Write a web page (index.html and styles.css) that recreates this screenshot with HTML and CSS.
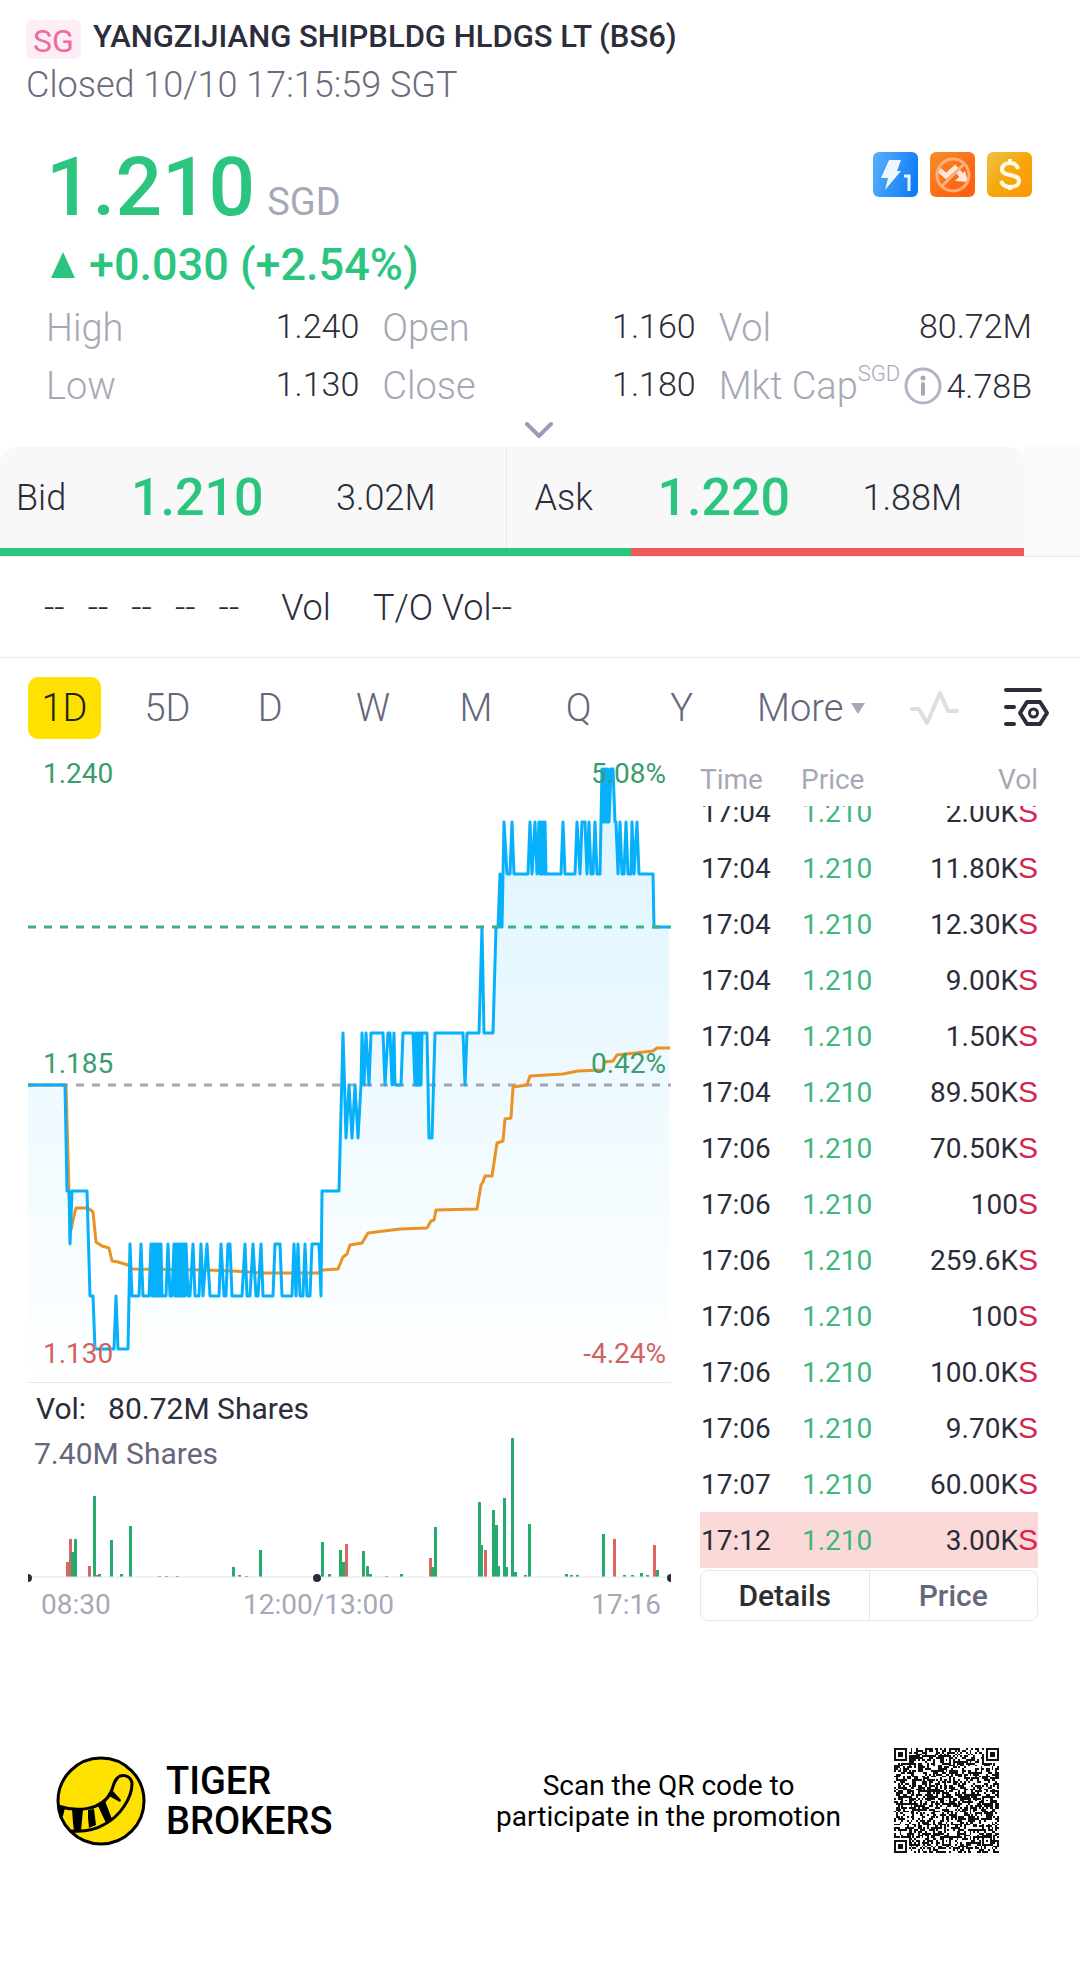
FILE: index.html
```
<!DOCTYPE html>
<html lang="en">
<head>
  <meta charset="UTF-8">
  <meta name="viewport" content="width=device-width, initial-scale=1.0">
  <title>YANGZIJIANG SHIPBLDG HLDGS LT (BS6)</title>
  <link rel="stylesheet" href="styles.css">
</head>
<body>
  <header class="head">
    <div class="head-row">
      <span class="market">SG</span>
      <h1>YANGZIJIANG SHIPBLDG HLDGS LT (BS6)</h1>
    </div>
    <p class="status">Closed 10/10 17:15:59 SGT</p>
  </header>

  <section class="quote">
    <div class="quote-top">
      <div class="last"><span class="last-price">1.210</span><span class="ccy">SGD</span></div>
      <div class="badges">
        <svg viewBox="0 0 45 45">
          <defs>
            <linearGradient id="blue" x1="0" y1="0.3" x2="1" y2="0.6"><stop offset="0" stop-color="#54adfb"/><stop offset="1" stop-color="#0d7cf6"/></linearGradient>
            <linearGradient id="orange" x1="0" y1="0" x2="1" y2="1"><stop offset="0" stop-color="#f5922a"/><stop offset="0.6" stop-color="#fd6a15"/><stop offset="1" stop-color="#ff5d10"/></linearGradient>
            <linearGradient id="gold" x1="0" y1="0" x2="1" y2="1"><stop offset="0" stop-color="#eec14b"/><stop offset="0.5" stop-color="#f6a80b"/><stop offset="1" stop-color="#fb9404"/></linearGradient>
          </defs>
          <rect width="45" height="45" rx="6" fill="url(#blue)"/>
          <path d="M16 8h12l-4 11h4L12 38l3-12H8z" fill="#eef7ff"/>
          <path d="M31 24h5v15" fill="none" stroke="#eef7ff" stroke-width="3"/>
        </svg>
        <svg viewBox="0 0 45 45">
          <rect width="45" height="45" rx="6" fill="url(#orange)"/>
          <path d="M9 18l7 6 9-8 7 8" fill="none" stroke="#ffe9d9" stroke-width="5"/>
          <path d="M25 29l10-10 3 11z" fill="#ffe9d9"/>
          <circle cx="23" cy="23" r="16" fill="none" stroke="#feb07c" stroke-width="3"/>
          <path d="M12 34L34 12" stroke="#feb07c" stroke-width="3"/>
        </svg>
        <svg viewBox="0 0 45 45">
          <rect width="45" height="45" rx="6" fill="url(#gold)"/>
          <path d="M31 17c-1-4-4-6-8-6-5 0-8 3-8 6 0 4 3 5 8 6s9 2 9 6-4 6-9 6-8-3-9-6" fill="none" stroke="#fffbe6" stroke-width="4"/>
          <path d="M23 7v4M23 34v4" stroke="#fffbe6" stroke-width="4"/>
        </svg>
      </div>
    </div>
    <div class="change">
      <svg viewBox="0 0 24 26"><path d="M12 0l12 26H0z" fill="#2cc57f"/></svg>
      <span>+0.030 (+2.54%)</span>
    </div>
    <dl class="stats">
      <div><dt>High</dt><dd>1.240</dd></div>
      <div><dt>Open</dt><dd>1.160</dd></div>
      <div><dt>Vol</dt><dd>80.72M</dd></div>
      <div><dt>Low</dt><dd>1.130</dd></div>
      <div><dt>Close</dt><dd>1.180</dd></div>
      <div>
        <dt>Mkt Cap<sup>SGD</sup></dt>
        <dd class="with-info">
          <svg viewBox="0 0 38 38"><circle cx="19" cy="19" r="17" fill="none" stroke="#b1b4c2" stroke-width="3"/><circle cx="19" cy="11" r="2.5" fill="#a5a9b6"/><path d="M19 17v10" stroke="#a5a9b6" stroke-width="4" stroke-linecap="round"/></svg>
          4.78B
        </dd>
      </div>
    </dl>
    <button class="expand" aria-label="Expand"><svg viewBox="0 0 28 18"><path d="M2 3l12 12L26 3" fill="none" stroke="#989db3" stroke-width="4" stroke-linecap="round"/></svg></button>
  </section>

  <section class="book">
    <div class="book-main">
      <div class="sides">
        <div class="side bid"><span>Bid</span><strong>1.210</strong><span>3.02M</span></div>
        <div class="side ask"><span>Ask</span><strong>1.220</strong><span>1.88M</span></div>
      </div>
      <div class="ratio"><div class="ratio-bid" style="width: 61.6%"></div></div>
    </div>
    <div class="book-rest"></div>
  </section>

  <section class="extra">
    <span class="dashes"><span>--</span><span>--</span><span>--</span><span>--</span><span>--</span></span>
    <span>Vol</span>
    <span>T/O Vol--</span>
  </section>

  <nav class="periods">
    <div class="tabs">
      <button class="active">1D</button><button>5D</button><button>D</button><button>W</button><button>M</button><button>Q</button><button>Y</button>
    </div>
    <button class="more">More <svg viewBox="0 0 14 11"><path d="M0 0h14L7 11z" fill="#a5a9b6"/></svg></button>
    <button class="tool" aria-label="Indicator"><svg viewBox="0 0 50 40"><path d="M3 21h7l8 14L31 5l8 18h9" fill="none" stroke="#dcdee4" stroke-width="4" stroke-linecap="round" stroke-linejoin="round"/></svg></button>
    <button class="tool" aria-label="Settings">
      <svg viewBox="0 0 50 40">
        <path d="M6 2h34M6 19h8M6 36h8" stroke="#2b2d3a" stroke-width="4" stroke-linecap="round"/>
        <path d="M27 14h13l7 11-7 11H27l-7-11z" fill="none" stroke="#2b2d3a" stroke-width="4" stroke-linejoin="round"/>
        <circle cx="33.500" cy="25" r="4" fill="none" stroke="#2b2d3a" stroke-width="3"/>
      </svg>
    </button>
  </nav>

  <main class="panels">
    <section class="chart">
      <svg class="price-chart" viewBox="0 0 643 632">
        <defs>
          <linearGradient id="fill" x1="0" y1="0" x2="0" y2="632" gradientUnits="userSpaceOnUse"><stop offset="0" stop-color="#00aeff" stop-opacity="0.13"/><stop offset="0.3" stop-color="#00aeff" stop-opacity="0.1"/><stop offset="1" stop-color="#00aeff" stop-opacity="0"/></linearGradient>
        </defs>
        <path id="area" fill="url(#fill)"/>
        <path d="M0 335h643" stroke="#a4a7b2" stroke-width="3" stroke-dasharray="8 8"/>
        <path id="avg" fill="none" stroke="#ec9224" stroke-width="3" stroke-linejoin="round"/>
        <path id="line" fill="none" stroke="#07b0fb" stroke-width="3" stroke-linejoin="round"/>
        <path d="M0 177h643" stroke="#3db27f" stroke-width="3" stroke-dasharray="8 8"/>
        <g class="scale">
          <text x="15" y="33">1.240</text><text x="638" y="33" text-anchor="end">5.08%</text>
          <text x="15" y="323">1.185</text><text x="638" y="323" text-anchor="end">0.42%</text>
          <text class="down" x="15" y="613">1.130</text><text class="down" x="638" y="613" text-anchor="end">-4.24%</text>
        </g>
      </svg>
      <p class="vol-now"><span>Vol:</span><span>80.72M Shares</span></p>
      <p class="vol-max">7.40M Shares</p>
      <svg class="vol-chart" viewBox="0 0 643 108">
        <g id="bars"></g>
        <path d="M0 103h643" stroke="#e3e4e7" stroke-width="1"/>
        <g fill="#2b2d3a"><circle cx="0" cy="104" r="4"/><circle cx="289" cy="104" r="4"/><circle cx="643" cy="104" r="4"/></g>
      </svg>
      <div class="hours"><span>08:30</span><span>12:00/13:00</span><span>17:16</span></div>
    </section>

    <section class="ticks">
      <div class="tick-head"><span>Time</span><span>Price</span><span>Vol</span></div>
      <div class="tick-window">
        <table>
          <tbody>
            <tr><td>17:04</td><td>1.210</td><td>2.00K<b>S</b></td></tr>
            <tr><td>17:04</td><td>1.210</td><td>11.80K<b>S</b></td></tr>
            <tr><td>17:04</td><td>1.210</td><td>12.30K<b>S</b></td></tr>
            <tr><td>17:04</td><td>1.210</td><td>9.00K<b>S</b></td></tr>
            <tr><td>17:04</td><td>1.210</td><td>1.50K<b>S</b></td></tr>
            <tr><td>17:04</td><td>1.210</td><td>89.50K<b>S</b></td></tr>
            <tr><td>17:06</td><td>1.210</td><td>70.50K<b>S</b></td></tr>
            <tr><td>17:06</td><td>1.210</td><td>100<b>S</b></td></tr>
            <tr><td>17:06</td><td>1.210</td><td>259.6K<b>S</b></td></tr>
            <tr><td>17:06</td><td>1.210</td><td>100<b>S</b></td></tr>
            <tr><td>17:06</td><td>1.210</td><td>100.0K<b>S</b></td></tr>
            <tr><td>17:06</td><td>1.210</td><td>9.70K<b>S</b></td></tr>
            <tr><td>17:07</td><td>1.210</td><td>60.00K<b>S</b></td></tr>
            <tr class="latest"><td>17:12</td><td>1.210</td><td>3.00K<b>S</b></td></tr>
          </tbody>
        </table>
      </div>
      <div class="switch"><button class="on">Details</button><button>Price</button></div>
    </section>
  </main>

  <footer class="promo">
    <svg class="logo" viewBox="0 0 90 90">
      <circle cx="45" cy="45" r="43" fill="#ffe100" stroke="#000" stroke-width="3"/>
      <path d="M2 50C20 56 46 55 55 36c3-7 3-13 9-16 6-2 12 2 12 8 0 14-12 32-27 40-10 6-22 8-34 7" fill="none" stroke="#000" stroke-width="3"/>
      <path d="M2 49l7 3-2 8-3 3zM16 53l11 1-2 21h-7l-1-8zM32 54l6-1 2 16-7 3-1-10zM42 50l7-5 7 18-6 4zM53 40l4-5 8 9-1 2z" fill="#000"/>
    </svg>
    <p class="brand">TIGER<br>BROKERS</p>
    <p class="scan">Scan the QR code to<br>participate in the promotion</p>
    <svg class="qr" viewBox="0 0 57 57" shape-rendering="crispEdges"><path id="qr" fill="#111"/></svg>
  </footer>

  <script src="script.js"></script>
</body>
</html>
```
FILE: styles.css
```
* { box-sizing: border-box; }
body { margin: 0; background: #fff; color: #2b2d3a; font-family: Roboto, "Liberation Sans", sans-serif; font-size: 28px; }
h1, p, dl, dd { margin: 0; }
button { padding: 0; border: none; background: none; color: inherit; font: inherit; cursor: pointer; }
svg { display: block; }

.head { padding: 18px 26px 0; }
.head-row { display: flex; gap: 12px; }
.market { width: 55px; height: 39px; margin-top: 2px; border-radius: 6px; background: #fdeef5; color: #ee6aa3; font-size: 32px; line-height: 42px; text-align: center; }
h1 { font-size: 31px; font-weight: 500; line-height: 38px; }
.status { margin-top: 4px; color: #6a6c7d; font-size: 36px; line-height: 44px; font-weight: 300; }

.quote { padding: 36px 48px 0 46px; }
.quote-top { display: flex; justify-content: space-between; align-items: flex-start; }
.last { display: flex; align-items: baseline; gap: 12px; color: #2cc57f; }
.last-price { font-size: 82px; font-weight: 500; line-height: 88px; }
.ccy { color: #a5a9b6; font-size: 38px; line-height: 40px; }
.badges { display: flex; gap: 12px; padding-top: 9px; }
.badges svg { width: 45px; height: 45px; }
.change { display: flex; align-items: center; gap: 14px; margin-top: 8px; padding-left: 5px; color: #2cc57f; font-size: 45px; font-weight: 500; line-height: 52px; }
.change svg { width: 24px; height: 26px; }
.stats { display: grid; grid-template-columns: repeat(3, 1fr); column-gap: 23px; margin-top: 8px; }
.stats div { display: flex; justify-content: space-between; height: 58px; line-height: 58px; white-space: nowrap; }
dt { color: #a5a9b6; font-size: 38px; font-weight: 300; }
dd { font-size: 34px; font-weight: 300; line-height: 54px; }
sup { font-size: 22px; line-height: 22px; vertical-align: 18px; }
.with-info { display: flex; align-items: center; gap: 4px; }
.with-info svg { width: 38px; height: 38px; }
.expand { display: block; margin: 6px auto 8px; }
.expand svg { width: 28px; height: 18px; }

.book { display: flex; height: 110px; border-bottom: 1px solid #ececee; }
.book-main { flex: 1; }
.book-rest { width: 56px; background: #f9f9f9; }
.sides { display: flex; height: 101px; border-radius: 16px 16px 0 0; background: #f8f8f8; }
.side { flex: 1; display: grid; grid-template-columns: 115px 205px 1fr; align-items: center; padding-left: 16px; font-size: 36px; font-weight: 300; }
.ask { grid-template-columns: 123px 205px 1fr; padding-left: 28px; border-left: 1px solid #e8e8ea; }
.side strong { color: #2cc57f; font-size: 52px; font-weight: 500; }
.ratio { height: 8px; background: #ee5a58; }
.ratio-bid { height: 8px; background: #2cc57f; }

.extra { display: flex; gap: 42px; height: 101px; padding: 0 44px; border-bottom: 1px solid #ececee; font-size: 36px; font-weight: 300; line-height: 102px; }
.dashes { display: flex; gap: 23px; }

.periods { display: flex; align-items: center; height: 92px; padding: 8px 30px 0 13px; color: #65677a; font-size: 38px; font-weight: 300; }
.tabs { display: flex; width: 720px; }
.tabs button { flex: 1; height: 62px; }
.tabs .active { flex: 0 0 73px; margin: 0 15px; border-radius: 10px; background: #ffe100; color: #23221a; }
.more { display: flex; align-items: center; gap: 8px; margin: 0 44px 0 24px; }
.more svg { width: 14px; height: 11px; }
.tool svg { width: 50px; height: 40px; }
.tool + .tool { margin-left: auto; }

.panels { display: grid; grid-template-columns: 643fr 338fr; column-gap: 29px; padding: 0 42px 0 28px; }
.price-chart { width: 100%; border-bottom: 1px solid #e8e8ea; }
.scale { fill: #3a9d6c; font-size: 28px; }
.scale .down { fill: #d3625f; }
.vol-now, .vol-max { font-size: 30px; line-height: 44px; }
.vol-now { display: flex; gap: 22px; padding: 4px 8px 0; }
.vol-max { padding: 1px 6px 0; color: #65677a; }
.vol-chart { width: 100%; margin-top: -2px; overflow: visible; clip-path: inset(-80px 0 0 0); }
.hours { display: grid; grid-template-columns: 202px 1fr auto; padding: 4px 10px 0 13px; color: #a5a9b6; line-height: 38px; }

.tick-head { display: grid; grid-template-columns: 101px 1fr 1fr; height: 56px; color: #a5a9b6; line-height: 60px; }
.tick-head span:last-child { text-align: right; }
.tick-window { display: flex; align-items: flex-end; height: 762px; overflow: hidden; }
table { width: 100%; border-collapse: collapse; }
tr { height: 56px; }
td { padding: 0; }
td:first-child { width: 102px; padding-left: 1px; }
td:nth-child(2) { color: #3fb57f; }
td:last-child { text-align: right; }
td b { color: #d6244f; font-family: "Liberation Sans", sans-serif; font-size: 30px; font-weight: 400; line-height: 30px; }
.latest { background: #fbd9d9; }
.switch { display: flex; height: 51px; margin-top: 2px; border: 1px solid #e6e8ec; border-radius: 8px; }
.switch button { flex: 1; color: #65677a; font-size: 30px; font-weight: 500; }
.switch .on { border-right: 1px solid #e6e8ec; color: #2e2e30; }

.promo { display: flex; align-items: center; margin-top: 124px; padding: 0 81px 0 56px; color: #000; }
.logo { width: 90px; height: 90px; }
.brand { margin-left: 20px; font-size: 38px; font-weight: 500; line-height: 40px; }
.scan { margin: 0 53px 0 auto; line-height: 31px; text-align: center; }
.qr { width: 105px; height: 105px; }
```
FILE: script.js
```
// runs of minute-by-minute flips between two prices
function flicker(from, to, low, high) {
  const points = [];
  for (let x = from; x <= to; x++) points.push([x, (x - from) % 2 ? low : high]);
  return points;
}

// price in SGD at each x of the chart
const prices = [
  [0,1.18],[37,1.18],[39,1.16],[41,1.16],[42,1.15],[44,1.16],[59,1.16],[62,1.14],[65,1.14],[67,1.13],[86,1.13],[88,1.14],[90,1.13],[100,1.13],
  [102,1.15],[104,1.14],[111,1.14],[113,1.15],[115,1.14],[121,1.14],...flicker(123, 134, 1.14, 1.15),[136,1.14],
  [138,1.14],[140,1.15],[142,1.14],[144,1.14],...flicker(146, 158, 1.14, 1.15),[160,1.14],[162,1.14],
  [165,1.15],[167,1.14],[171,1.14],[173,1.15],[175,1.14],[179,1.15],[182,1.14],[191,1.14],[193,1.15],[196,1.14],[198,1.14],[200,1.15],[202,1.15],[204,1.14],
  [214,1.14],[217,1.15],[219,1.14],[222,1.14],[225,1.15],[228,1.14],[230,1.14],[233,1.15],[235,1.14],[245,1.14],[247,1.15],[252,1.15],[254,1.14],
  [264,1.14],[266,1.15],[268,1.14],[270,1.15],[272,1.14],[275,1.14],[277,1.15],[279,1.14],[282,1.14],[284,1.15],[291,1.15],[293,1.14],[294,1.16],[311,1.16],
  [315,1.19],[318,1.17],[321,1.18],[324,1.17],[327,1.18],[330,1.17],[333,1.18],[334,1.19],[336,1.18],[338,1.19],[341,1.18],[343,1.19],[355,1.19],[357,1.18],
  [360,1.19],[362,1.19],[364,1.18],[366,1.19],[367,1.18],[373,1.18],[375,1.19],[385,1.19],...flicker(387, 394, 1.19, 1.18),[396,1.19],
  [399,1.19],[401,1.17],[404,1.17],[407,1.19],[435,1.19],[437,1.18],[439,1.19],[451,1.19],[454,1.21],[456,1.19],[465,1.19],[468,1.21],[470,1.21],[472,1.22],
  [473,1.21],[474,1.21],[476,1.23],[479,1.22],[482,1.22],[484,1.23],[486,1.22],[500,1.22],[502,1.23],[504,1.22],[507,1.23],[509,1.22],
  ...flicker(511, 518, 1.22, 1.23),[519,1.22],[533,1.22],[535,1.23],[537,1.22],[547,1.22],[549,1.23],[552,1.22],[554,1.23],[557,1.23],[559,1.22],[561,1.23],
  [563,1.22],[565,1.22],[567,1.23],[569,1.22],[572,1.22],...flicker(574, 580, 1.23, 1.24),[581,1.23],[583,1.24],[585,1.24],[587,1.23],
  [588,1.23],[590,1.22],[592,1.23],[594,1.22],[596,1.22],[598,1.23],[600,1.22],[603,1.22],[604,1.23],[606,1.22],[609,1.23],[611,1.22],[625,1.22],[626,1.21],[641,1.21]
];

const average = [
  [0,335],[38,335],[41,441],[43,480],[46,466],[48,458],[60,458],[65,462],[68,492],[74,496],[81,498],[84,511],[90,512],[100,515],[104,519],[179,520],[205,521],
  [235,523],[290,523],[295,520],[310,519],[315,507],[319,504],[322,495],[334,493],[340,483],[372,479],[399,478],[403,471],[406,470],[408,460],[449,459],
  [453,435],[455,432],[457,426],[464,426],[469,393],[475,391],[477,369],[483,368],[485,337],[499,335],[502,326],[535,324],[550,321],[575,320],[576,312],
  [585,311],[589,305],[625,301],[629,298],[642,298]
];

// x, height, 1 = down
const volumes = [
  [39,15,1],[42,38,1],[44,25],[47,38],[61,11,1],[66,81],[68,2,1],[71,3],[83,37],[93,3],[102,51],[131,1],[138,1],[149,1],[205,10],[211,2],[218,1],[232,27],
  [294,35],[301,3],[312,27],[315,15],[318,33,1],[335,26],[339,11],[342,3],[358,1],[373,3],[402,19,1],[404,10],[407,50],[451,75],[453,32],[457,27,1],[465,67],
  [468,52],[470,11],[476,79],[478,10],[484,139],[487,5],[497,2],[501,53],[538,3],[543,2],[549,2],[575,43],[586,38,1],[596,2],[604,2],[613,4],[619,2],[626,32,1],[629,7]
];

const priceY = p => Math.round(19 + (1.24 - p) * 5273);
const toPath = points => 'M' + points.map(p => p.join(' ')).join('L');
const setPath = (id, d) => document.getElementById(id).setAttribute('d', d);

const line = toPath(prices.map(([x, p]) => [x, priceY(p)]));
setPath('line', line);
setPath('area', line + 'V632H0Z');
setPath('avg', toPath(average));

document.getElementById('bars').innerHTML = volumes.map(([x, h, down]) =>
  `<rect x="${x - 1}" y="${103 - h}" width="3" height="${h}" fill="${down ? '#dc6461' : '#27ab6d'}"/>`
).join('');

function drawQr() {
  const n = 57;
  let seed = 7;
  let d = '';
  const marks = [6, 28, 50];
  for (let y = 0; y < n; y++) {
    for (let x = 0; x < n; x++) {
      seed = (seed * 1103515245 + 12345) % 2147483648;
      let on = seed / 2147483648 > 0.48;
      marks.forEach(my => marks.forEach(mx => {
        const r = Math.max(Math.abs(x - mx), Math.abs(y - my));
        if (r <= 2) on = r !== 1;
      }));
      [[3, 3], [53, 3], [3, 53]].forEach(([fx, fy]) => {
        const r = Math.max(Math.abs(x - fx), Math.abs(y - fy));
        if (r <= 4) on = r !== 4 && r !== 2;
      });
      if (on) d += `M${x} ${y}h1v1h-1z`;
    }
  }
  setPath('qr', d);
}

drawQr();
```
